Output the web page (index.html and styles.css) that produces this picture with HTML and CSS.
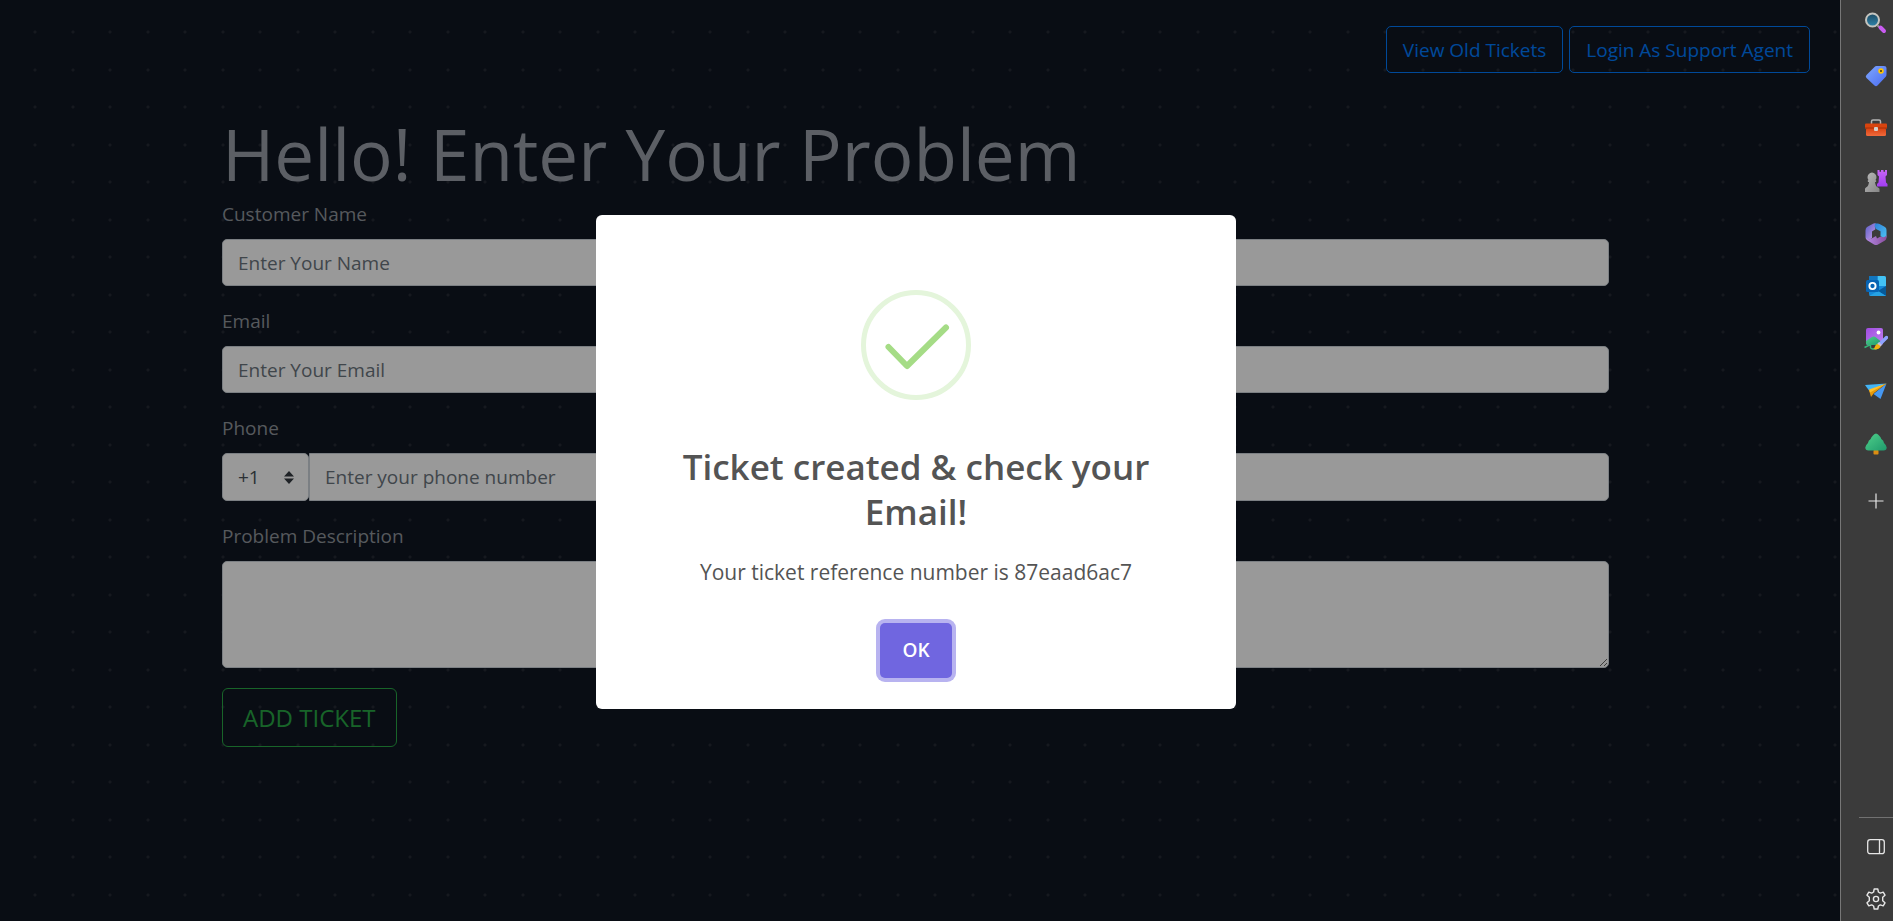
FILE: index.html
```html
<!DOCTYPE html>
<html lang="en">
<head>
<meta charset="utf-8">
<title>Support Tickets</title>
<link rel="stylesheet" href="styles.css">
</head>
<body>
<div class="page">
  <nav class="topbar">
    <a class="btn btn-primary" href="#tickets">View Old Tickets</a>
    <a class="btn btn-primary" href="#login">Login As Support Agent</a>
  </nav>
  <main class="container">
    <h1 class="title">Hello! Enter Your Problem</h1>
    <form>
      <div class="field">
        <label for="name">Customer Name</label>
        <input class="control" id="name" type="text" placeholder="Enter Your Name">
      </div>
      <div class="field">
        <label for="email">Email</label>
        <input class="control" id="email" type="email" placeholder="Enter Your Email">
      </div>
      <div class="field">
        <label for="phone">Phone</label>
        <div class="phone">
          <div class="code">
            <select class="control" aria-label="Country code"><option>+1</option><option>+44</option><option>+91</option></select>
            <svg class="caret" viewBox="0 0 10 13" aria-hidden="true"><path d="M5 0l5 5.5H0zM5 13l5-5.5H0z" fill="#343a40"/></svg>
          </div>
          <input class="control phone-input" id="phone" type="tel" placeholder="Enter your phone number">
        </div>
      </div>
      <div class="field">
        <label for="problem">Problem Description</label>
        <textarea class="control area" id="problem"></textarea>
      </div>
      <button class="btn btn-success" type="button">ADD TICKET</button>
    </form>
  </main>
  <div class="overlay">
    <div class="modal" role="dialog" aria-labelledby="modal-title">
      <svg class="success" viewBox="0 0 110 110" aria-hidden="true">
        <circle cx="55" cy="55" r="52.5" fill="none" stroke="#e4f5db" stroke-width="5"/>
        <path d="M27.500 57L46 76 85 37.500" fill="none" stroke="#a5dc86" stroke-width="6" stroke-linecap="round" stroke-linejoin="round"/>
      </svg>
      <h2 class="modal-title" id="modal-title">Ticket created &amp; check your Email!</h2>
      <p class="modal-text">Your ticket reference number is 87eaad6ac7</p>
      <button class="ok" type="button">OK</button>
    </div>
  </div>
</div>
<aside class="rail">
  <svg class="defs" width="0" height="0" aria-hidden="true">
    <defs>
      <linearGradient id="blue" x1="0" y1="0" x2="1" y2="1"><stop offset="0" stop-color="#7fa8ff"/><stop offset="1" stop-color="#4a6bf0"/></linearGradient>
      <linearGradient id="lens" x1="0" y1="0" x2="0" y2="1"><stop offset="0" stop-color="#1d4a63"/><stop offset="1" stop-color="#2e83ab"/></linearGradient>
      <linearGradient id="purple" x1="0" y1="0" x2="0" y2="1"><stop offset="0" stop-color="#c766f5"/><stop offset="1" stop-color="#a13df0"/></linearGradient>
      <linearGradient id="red" x1="0" y1="0" x2="0" y2="1"><stop offset="0" stop-color="#d8400f"/><stop offset="1" stop-color="#f06a3c"/></linearGradient>
      <linearGradient id="gray" x1="0" y1="0" x2="1" y2="1"><stop offset="0" stop-color="#b9b9b9"/><stop offset="1" stop-color="#858585"/></linearGradient>
      <linearGradient id="cyan" x1="0" y1="0" x2="1" y2="1"><stop offset="0" stop-color="#2f7fd8"/><stop offset="1" stop-color="#4dc4f2"/></linearGradient>
      <linearGradient id="violet" x1="0" y1="0" x2="1" y2="1"><stop offset="0" stop-color="#5b5fc7"/><stop offset="1" stop-color="#c79be8"/></linearGradient>
      <linearGradient id="lilac" x1="0" y1="0" x2="1" y2="0"><stop offset="0" stop-color="#b58be6"/><stop offset="1" stop-color="#8a4f9e"/></linearGradient>
      <linearGradient id="green" x1="0" y1="0" x2="1" y2="1"><stop offset="0" stop-color="#4fd08a"/><stop offset="1" stop-color="#1f9a6c"/></linearGradient>
      <linearGradient id="pic" x1="0" y1="0" x2="1" y2="1"><stop offset="0" stop-color="#a04de0"/><stop offset="1" stop-color="#c080f0"/></linearGradient>
    </defs>
  </svg>
  <div class="apps">
    <button type="button" aria-label="Search"><svg viewBox="0 0 24 24"><path d="M13.500 14.500l3.500 3" stroke="#999" stroke-width="2"/><path d="M16.500 16.500l3.500 3.500" stroke="#c95cf2" stroke-width="4" stroke-linecap="round"/><circle cx="8.500" cy="9" r="6.500" fill="url(#lens)" stroke="#c4c4bf" stroke-width="2"/></svg></button>
    <button type="button" aria-label="Shopping"><svg viewBox="0 0 24 24"><path d="M12.500 2h7.500q2.500 0 2.500 2v6.500q0 1.500-1 2.500l-8 8.500q-1.500 1.500-3 0l-8-7.500q-1.500-1.500 0-3l8-8q.8-1 2-1z" fill="url(#blue)"/><circle cx="17" cy="7" r="1.900" fill="#443d1a" stroke="#ffc400" stroke-width="1.700"/></svg></button>
    <button type="button" aria-label="Tools"><svg viewBox="0 0 24 24"><path d="M7.500 8V5.500Q7.500 4 9 4h6q1.500 0 1.500 1.500V8" fill="none" stroke="#b5b5b5" stroke-width="1.500"/><rect x="2" y="12" width="20" height="8" rx="1.500" fill="url(#red)"/><path d="M2 7.500h20q1 0 1 1v4H1v-4q0-1 1-1z" fill="#d8440f"/><path d="M1 12h22" stroke="#a93008"/><rect x="10" y="11" width="4" height="4" rx="1" fill="#d5d0cb"/></svg></button>
    <button type="button" aria-label="Games"><svg viewBox="0 0 24 24"><path d="M13.500 1h2v1.800h1.500V1h2.500v1.800H21V1h2v5l-1.500 1.500.5 6 1.500 1.500v2.500H13V15l1.500-1.500.5-6L13.500 6z" fill="url(#purple)"/><path d="M1 23v-3q0-1 1-1.500 2.500-1 3-5.500H4q-1-1.500.5-2Q3.500 10 3.500 8 4 4 8 3.500q4 .5 4.500 4.500 0 2-1 3 1.500.5.500 2h-1q.5 4.500 3 5.500 1.500.5 1.500 1.500v3z" fill="url(#gray)"/></svg></button>
    <button type="button" aria-label="Microsoft 365"><svg viewBox="0 0 24 24"><path d="M12 1.500Q10 1 8.500 2L3 5Q1.500 6 1.500 8.500V15q0 2 2 2.500 2 .5 4.500-1.500V9.500l3.500-2.200q-1.500-3.500.5-5.800z" fill="url(#violet)"/><path d="M11.500 1.500h2q1.500 0 2.500.8L21 5Q22.500 6 22.500 8v7q-.5 2-3 1.200L16.500 14V9.300L12 7q-2.500-3.500-.5-5.500z" fill="url(#cyan)"/><path d="M22.500 13v2.500q0 2-1.500 3L14 22.500q-2 1-4 0l-6.500-4Q2 17.500 1.500 15.500q3 3 7 .5l3.500-2 1 2.500 3.500-2q4 2 6-1.500z" fill="url(#lilac)"/></svg></button>
    <button type="button" aria-label="Outlook"><svg viewBox="0 0 24 24"><path d="M6 2h14q2 0 2 2v18H7q-2 0-2-2V3q0-1 1-1z" fill="#1689d8"/><path d="M13.500 2H20q2 0 2 2v8h-8.500z" fill="#43c2f4"/><path d="M6 2h7.500v5H5V3q0-1 1-1z" fill="#1276bf"/><path d="M22 12l-8 5 8 5z" fill="#075998"/><path d="M5 22l9-5 8 5z" fill="#26a2e4"/><rect x="2" y="6" width="13" height="12" rx="1.500" fill="#0864b4"/><circle cx="8.500" cy="12" r="3.100" fill="none" stroke="#fff" stroke-width="1.900"/></svg></button>
    <button type="button" aria-label="Image creator"><svg viewBox="0 0 24 24"><rect x="2" y="1" width="17" height="17" rx="2" fill="url(#pic)"/><circle cx="14.500" cy="5.500" r="1.900" fill="#fff"/><path d="M2 14l6-4q2-1 4 .5l5 4V18H4q-2 0-2-2z" fill="url(#green)"/><path d="M.500 20.500q7-4 6-1t6 2.500" fill="none" stroke="#35b577" stroke-width="1.500"/><path d="M22.500 10.500L16 17" stroke="#8ea2ff" stroke-width="3.500" stroke-linecap="round"/><path d="M16.500 16.500l-2 2" stroke="#c9bfd4" stroke-width="4"/><path d="M13 17q3 .5 3.500 3-2 3.500-7.500 2 1.500-.5 2-2.500.5-2 2-2.500z" fill="#f5b20e"/></svg></button>
    <button type="button" aria-label="Drop"><svg viewBox="0 0 24 24"><path d="M1 6l21.500-1.500-17.500 7z" fill="#43b4f5"/><path d="M22.500 4.500L16.500 20l-7-5z" fill="#4698f2"/><path d="M22.500 4.500L5 11l2 7 3-4z" fill="#e79a0b"/><path d="M22.500 4.500L5 10.500l1 3z" fill="#ffc02b"/></svg></button>
    <button type="button" aria-label="Tree"><svg viewBox="0 0 24 24"><rect x="9.500" y="18" width="5" height="4.500" rx=".8" fill="#dc8d12"/><path d="M12 1.500q1.800 0 3.500 2.500 1.500 1.500 1.800 3 2.500 1.500 2.700 4 2.700 2.500 2.700 4.500 0 3-3.200 3h-15q-3.200 0-3.200-3 0-2 2.700-4.500.2-2.500 2.700-4 .3-1.500 1.800-3Q10.200 1.500 12 1.500z" fill="url(#green)"/></svg></button>
  </div>
  <button class="add" type="button" aria-label="Add"><svg viewBox="0 0 24 24"><path d="M12 4.500v15M4.500 12h15" stroke="#e6e6e6" stroke-width="1.200"/></svg></button>
  <div class="tools">
    <button type="button" aria-label="Hide sidebar"><svg viewBox="0 0 24 24"><rect x="3.700" y="4.700" width="16.600" height="14" rx="2.500" fill="none" stroke="#e6e6e6" stroke-width="1.300"/><path d="M15.500 5v14" stroke="#e6e6e6" stroke-width="1.300"/></svg></button>
    <button type="button" aria-label="Settings"><svg viewBox="0 0 24 24"><g fill="none" stroke="#e6e6e6" stroke-width="1.400" stroke-linejoin="round"><path d="M10.200 2h3.600l.6 3 1.900 1.100 2.900-1 1.800 3.100-2.300 2v3.600l2.300 2-1.800 3.100-2.900-1-1.900 1.100-.6 3h-3.600l-.6-3-1.900-1.100-2.900 1L3 15.800l2.300-2v-3.600L3 8.200l1.800-3.100 2.900 1L9.600 5z"/><circle cx="12" cy="12" r="2.600"/></g></svg></button>
  </div>
</aside>
</body>
</html>
```
FILE: styles.css
```css
* { box-sizing: border-box; }

body {
  margin: 0;
  display: flex;
  min-height: 100vh;
  background: #0f1722;
  font: 19px/30px "Open Sans", "Noto Sans", sans-serif;
}

.page {
  position: relative;
  flex: 1;
  padding-right: 9px;
  background-color: #0f1722;
  background-image:
    radial-gradient(circle at 35px 32px, #252b35 1px, transparent 2px),
    radial-gradient(circle at 73px 32px, #252b35 1px, transparent 2px),
    radial-gradient(circle at 35px 70px, #252b35 1px, transparent 2px),
    radial-gradient(circle at 73px 70px, #252b35 1px, transparent 2px);
  background-size: 75px 75px;
}

.topbar {
  display: flex;
  justify-content: flex-end;
  gap: 6px;
  padding: 26px 21px 0 0;
}

.container {
  max-width: 1425px;
  margin: 0 auto;
  padding: 36px 19px 0;
}

.title {
  margin: 0;
  color: #9a9fa9;
  font-size: 71px;
  font-weight: 400;
  line-height: 90px;
}

.field { margin-bottom: 20px; }

label {
  display: block;
  margin-bottom: 10px;
  color: #8f949b;
}

.control {
  display: block;
  width: 100%;
  height: 47px;
  padding: 0 15px;
  border: 1px solid #ced4da;
  border-radius: 5px;
  background: #fff;
  color: #495057;
  font: inherit;
}

.control::placeholder { color: #6c757d; opacity: 1; }

.phone { display: flex; }
.code { position: relative; width: 87px; }
.code .control { appearance: none; height: 48px; }
.caret { position: absolute; top: 18px; right: 15px; width: 10px; height: 13px; }
.phone-input { flex: 1; height: 48px; border-radius: 0 5px 5px 0; }
.area { height: 107px; }

.btn {
  padding: 8px 16px 7px;
  border: 1px solid;
  border-radius: 5px;
  background: transparent;
  text-decoration: none;
}
.btn-primary { color: #007bff; }
.btn-success {
  padding: 9px 20px;
  border-radius: 6px;
  color: #28a745;
  font: 24px/39px "Open Sans", "Noto Sans", sans-serif;
}

.overlay {
  position: absolute;
  inset: 0;
  display: flex;
  align-items: center;
  justify-content: center;
  padding: 3px 8px 0 0;
  background: rgba(0, 0, 0, 0.4);
}

.modal {
  display: flex;
  flex-direction: column;
  align-items: center;
  width: 640px;
  padding: 75px 64px 31px;
  border-radius: 6px;
  background: #fff;
  color: #545454;
  text-align: center;
}
.success { width: 110px; height: 110px; }
.modal-title { margin: 44px 0 0; font-size: 35px; font-weight: 600; line-height: 45px; }
.modal-text { margin: 23px 0 0; font-size: 21px; line-height: 30px; }
.ok {
  margin-top: 36px;
  padding: 0 22px;
  border: 0;
  border-radius: 5px;
  background: #7066e0;
  box-shadow: 0 0 0 4px #b8b3f0;
  color: #fff;
  font: 600 19px/55px "Open Sans", "Noto Sans", sans-serif;
}

.rail {
  display: flex;
  flex-direction: column;
  width: 53px;
  padding: 11px 0 10px 18px;
  border-left: 1px solid #777;
  background: #3b3b3b;
}
.defs { position: absolute; }
.rail button { display: block; width: 34px; padding: 0; border: 0; background: none; }
.rail button svg { display: block; width: 24px; height: 24px; margin: 0 auto; }
.apps {
  display: flex;
  flex-direction: column;
  justify-content: space-between;
  height: 445px;
}
.add { margin-top: 33px; }
.tools {
  display: flex;
  flex-direction: column;
  gap: 28px;
  margin-top: auto;
  padding-top: 17px;
  border-top: 1px solid #717171;
}
```
